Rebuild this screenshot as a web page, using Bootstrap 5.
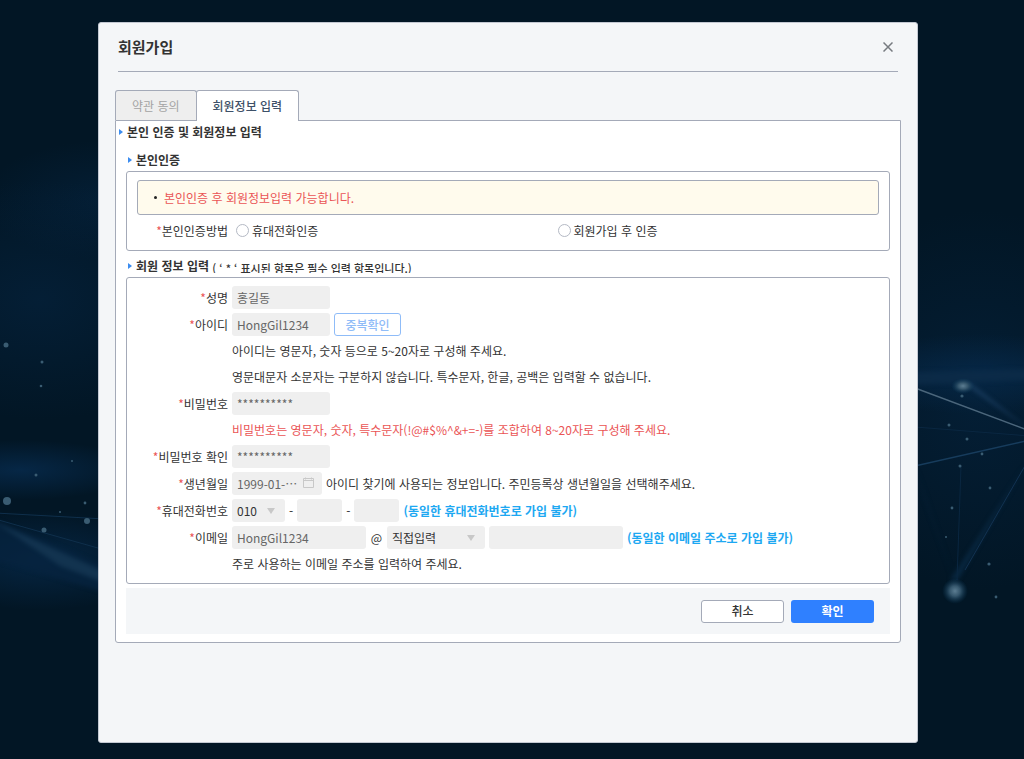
<!DOCTYPE html>
<html lang="ko">
<head>
<meta charset="utf-8">
<meta name="viewport" content="width=device-width, initial-scale=1">
<title>회원가입</title>
<link href="https://cdn.jsdelivr.net/npm/bootstrap@5.3.0/dist/css/bootstrap.min.css" rel="stylesheet">
<style>
  :root { --edge: #a4aab8; --field: #efefef; --surface: #f4f6f8; --red: #ea5455; --sky: #1da8f2; }
  body { font-family: "Noto Sans CJK KR", sans-serif; font-size: 12px; line-height: 16px; color: #333; background: #021625; }
  .backdrop { z-index: -1; }
  .dialog { margin: 22px 106px 16px 98px; min-height: calc(100vh - 38px); background: var(--surface); border: 1px solid #c3c8d2; border-radius: 3px; padding: 0 16px; }
  .dialog-head { height: 49px; margin: 0 3px; border-bottom: 1px solid var(--edge); }
  .dialog-head h1 { font-size: 15px; line-height: 20px; }
  .close-x { width: 20px; height: 20px; }
  .tabs { margin-top: 18px; border: 0; }
  .tabs .nav-link { height: 30px; margin: 0; padding: 0 16px; font-size: 12px; color: #a3a3a3; background: #eeeeee; border: 1px solid var(--edge); border-bottom: 0; border-radius: 3px 3px 0 0; }
  .tabs .nav-link.active { height: 31px; color: #3d5068; background: #fff; border-color: var(--edge); font-weight: 500; margin: 0 0 -1px -1px; position: relative; }
  .panel { background: #fff; border: 1px solid var(--edge); border-radius: 0 0 3px 3px; padding: 3px 10px 8px; }
  .heading { font-size: 12px; line-height: 16px; font-weight: 700; margin: 0; }
  .heading::before { content: ""; border: 3px solid transparent; border-left: 4px solid #3b8cf0; border-right: 0; margin-right: 4px; flex: none; }
  .heading-outer { margin-left: -7px; margin-bottom: 12px; }
  .heading-inner { margin-left: 2px; }
  .trimmed { height: 13px; overflow: hidden; font-size: 11px; font-weight: 500; }
  .frame { border: 1px solid var(--edge); border-radius: 3px; }
  .frame-auth { margin: 3px 0 7px; padding: 8px 10px; }
  .frame-info { margin: 3px 0 4px; padding: 8px 0; }
  .notice { height: 35px; padding-left: 16px; background: #fffbed; border: 1px solid var(--edge); border-radius: 3px; color: var(--red); }
  .notice::before { content: ""; width: 3px; height: 3px; border-radius: 50%; background: #222; margin-right: 7px; }
  .line { display: flex; align-items: center; gap: 4px; min-height: 23px; margin-bottom: 4px; }
  .line-note { min-height: 22px; padding-left: 105px; }
  .cap { width: 101px; text-align: right; flex: none; }
  .cap-auth { width: 91px; }
  .cap::before { content: "*"; color: var(--red); }
  .line .form-control, .line .form-select { width: 98px; height: 23px; min-height: 0; padding: 0 5px; font-size: 12px; line-height: 23px; color: #666; background-color: var(--field); border: 0; border-radius: 3px; }
  .line .form-select { color: #333; background-position: right 10px center; background-size: 8px 6px;
    background-image: url("data:image/svg+xml,%3csvg xmlns='http://www.w3.org/2000/svg' viewBox='0 0 8 6'%3e%3cpath d='M0 0h8L4 6z' fill='%23c8c8c8'/%3e%3c/svg%3e"); }
  .line .w-date { width: 90px; }
  .line .w-code { width: 53px; }
  .line .w-part { width: 45px; }
  .line .w-mail { width: 134px; }
  .at-sign { width: 13px; text-align: center; }
  .cal { right: 8px; top: 5px; }
  .choice { width: 13px; height: 13px; margin: 0 3px 0 0; border-color: #b4b9c4; }
  .hint { color: var(--sky); font-weight: 700; }
  .warn { color: var(--red); }
  .btn-small { font-size: 12px; line-height: 16px; border-radius: 3px; padding: 0; }
  .btn-dup { width: 67px; height: 23px; color: #8fbcf8; background: #fff; border: 1px solid #8fbcf8; font-weight: 500; }
  .btn-foot { width: 83px; height: 23px; font-weight: 500; }
  .btn-cancel { color: #333; background: #fff; border: 1px solid var(--edge); }
  .btn-ok { color: #fff; background: #2f80ff; border: 0; font-weight: 700; }
  .foot { height: 46px; background: var(--surface); padding-right: 16px; gap: 7px; }
</style>
</head>
<body>
<svg class="backdrop position-fixed top-0 start-0 w-100 h-100" viewBox="0 0 1024 759" preserveAspectRatio="xMidYMid slice" aria-hidden="true">
  <defs>
    <radialGradient id="haze"><stop offset="0" stop-color="#062746"/><stop offset="1" stop-color="#062746" stop-opacity="0"/></radialGradient>
    <radialGradient id="orb"><stop offset="0" stop-color="#5c7d92"/><stop offset=".4" stop-color="#35566c"/><stop offset="1" stop-color="#0a3554" stop-opacity="0"/></radialGradient>
    <filter id="soft" x="-20%" y="-50%" width="140%" height="200%" color-interpolation-filters="sRGB"><feGaussianBlur stdDeviation="2"/></filter>
  </defs>
  <rect width="1024" height="759" fill="#021625"/>
  <ellipse cx="110" cy="200" rx="130" ry="60" fill="url(#haze)" opacity=".5"/>
  <ellipse cx="40" cy="300" rx="170" ry="120" fill="url(#haze)" opacity=".5"/>
  <ellipse cx="20" cy="470" rx="120" ry="30" fill="url(#haze)"/>
  <ellipse cx="40" cy="560" rx="130" ry="50" fill="url(#haze)" opacity=".9"/>
  <ellipse cx="980" cy="400" rx="170" ry="190" fill="url(#haze)" opacity=".5"/>
  <ellipse cx="980" cy="374" rx="150" ry="40" fill="url(#haze)"/>
  <g filter="url(#soft)">
    <path d="M-5 520 105 566V592L-5 560z" fill="#06233e" opacity=".8"/>
    <path d="M-5 522 105 572V583L60 566z" fill="#12334f"/>
    <path d="M910 372 1030 369V380L910 385z" fill="#0c2c49" opacity=".8"/>
    <path d="M960 381 972 384 1030 430z" fill="#17395a"/>
    <path d="M1026 464 958 580 950 580z" fill="#08263f"/>
    <path d="M915 466 925 500 956 586z" fill="#061f34"/>
  </g>
  <g fill="none">
    <path d="M-5 513 105 519M-5 519 105 550" stroke="#0f2f4b"/>
    <path d="M915 388 1030 431" stroke="#4b667b" stroke-width="1.4"/>
    <path d="M915 466 1030 440" stroke="#173c5c" stroke-width="1.4"/>
    <path d="M915 427 1030 436M961 466 957 580" stroke="#0a2741"/>
    <path d="M1026 464 965 570" stroke="#123251"/>
  </g>
  <ellipse cx="963" cy="386" rx="12" ry="8" fill="url(#orb)"/>
  <circle cx="955" cy="591" r="13" fill="url(#orb)"/>
  <g fill="#3a5c72">
    <circle cx="6" cy="345" r="2.5"/><circle cx="42" cy="362" r="1.5"/><circle cx="41" cy="386" r="1.3"/><circle cx="36" cy="475" r="1.5"/>
    <circle cx="7" cy="501" r="4"/><circle cx="44" cy="530" r="2.5"/><circle cx="87" cy="521" r="3"/><circle cx="85" cy="503" r="1.4"/><circle cx="72" cy="461" r="1"/><circle cx="60" cy="512" r="1"/>
    <circle cx="949" cy="425" r="1.5"/><circle cx="967" cy="439" r="1.5"/><circle cx="982" cy="454" r="1.4"/><circle cx="960" cy="466" r="1.5"/><circle cx="990" cy="488" r="1.4"/><circle cx="952" cy="508" r="1.4"/><circle cx="946" cy="537" r="1"/><circle cx="989" cy="564" r="1.6"/><circle cx="996" cy="597" r="1.4"/><circle cx="962" cy="396" r="1.6"/>
  </g>
</svg>

<main class="dialog">
  <header class="dialog-head d-flex align-items-center justify-content-between">
    <h1 class="fw-bold m-0">회원가입</h1>
    <button type="button" class="close-x btn p-0 border-0 d-flex align-items-center justify-content-center" aria-label="닫기">
      <svg width="10" height="10" viewBox="0 0 10 10" fill="none" stroke="#777b80" stroke-width="1.5"><path d="M.5.5l9 9M9.500.5l-9 9"/></svg>
    </button>
  </header>

  <nav class="nav nav-tabs tabs">
    <button type="button" class="nav-link">약관 동의</button>
    <button type="button" class="nav-link active" aria-current="page">회원정보 입력</button>
  </nav>

  <form class="panel">
    <h2 class="heading heading-outer d-flex align-items-center">본인 인증 및 회원정보 입력</h2>

    <h3 class="heading heading-inner d-flex align-items-center">본인인증</h3>
    <section class="frame frame-auth">
      <div class="notice d-flex align-items-center">본인인증 후 회원정보입력 가능합니다.</div>
      <div class="line mt-1 mb-0" role="radiogroup" aria-labelledby="method">
        <span class="cap cap-auth" id="method">본인인증방법</span>
        <div class="row g-0 flex-fill ps-1">
          <div class="col-6 d-flex align-items-center"><input class="form-check-input choice" type="radio" name="auth" id="auth-phone"><label for="auth-phone">휴대전화인증</label></div>
          <div class="col-6 d-flex align-items-center"><input class="form-check-input choice" type="radio" name="auth" id="auth-later"><label for="auth-later">회원가입 후 인증</label></div>
        </div>
      </div>
    </section>

    <h3 class="heading heading-inner d-flex align-items-center">회원 정보 입력&nbsp;<span class="trimmed">( ‘ * ‘ 표시된 항목은 필수 입력 항목입니다.)</span></h3>
    <section class="frame frame-info">
      <div class="line"><label class="cap" for="name">성명</label><input class="form-control" id="name" value="홍길동"></div>
      <div class="line"><label class="cap" for="uid">아이디</label><input class="form-control" id="uid" value="HongGil1234"><button type="button" class="btn btn-small btn-dup">중복확인</button></div>
      <div class="line line-note">아이디는 영문자, 숫자 등으로 5~20자로 구성해 주세요.</div>
      <div class="line line-note">영문대문자 소문자는 구분하지 않습니다. 특수문자, 한글, 공백은 입력할 수 없습니다.</div>
      <div class="line"><label class="cap" for="pw">비밀번호</label><input class="form-control" id="pw" value="**********"></div>
      <div class="line line-note warn">비밀번호는 영문자, 숫자, 특수문자(!@#$%^&amp;+=-)를 조합하여 8~20자로 구성해 주세요.</div>
      <div class="line"><label class="cap" for="pw2">비밀번호 확인</label><input class="form-control" id="pw2" value="**********"></div>
      <div class="line"><label class="cap" for="birth">생년월일</label>
        <div class="position-relative"><input class="form-control w-date" id="birth" value="1999-01-⋯">
          <svg class="cal position-absolute" width="11" height="12" viewBox="0 0 11 12" fill="none" stroke="#c8c8c8"><path d="M.5 1.500h10v9H.5zM.5 3.500h10M2.500.5v2M8.500.5v2"/></svg></div>
        <span>아이디 찾기에 사용되는 정보입니다. 주민등록상 생년월일을 선택해주세요.</span></div>
      <div class="line"><label class="cap" for="tel1">휴대전화번호</label>
        <select class="form-select w-code" id="tel1"><option>010</option></select><span>-</span>
        <input class="form-control w-part" aria-label="휴대전화 가운데 자리"><span>-</span>
        <input class="form-control w-part" aria-label="휴대전화 끝 자리"><span class="hint">(동일한 휴대전화번호로 가입 불가)</span></div>
      <div class="line"><label class="cap" for="mail">이메일</label><input class="form-control w-mail" id="mail" value="HongGil1234"><span class="at-sign">@</span>
        <select class="form-select" aria-label="이메일 도메인"><option>직접입력</option></select>
        <input class="form-control w-mail" aria-label="도메인 직접입력"><span class="hint">(동일한 이메일 주소로 가입 불가)</span></div>
      <div class="line line-note mb-0">주로 사용하는 이메일 주소를 입력하여 주세요.</div>
    </section>

    <footer class="foot d-flex align-items-center justify-content-end">
      <button type="button" class="btn btn-small btn-foot btn-cancel">취소</button>
      <button type="submit" class="btn btn-small btn-foot btn-ok">확인</button>
    </footer>
  </form>
</main>
<script src="https://cdn.jsdelivr.net/npm/bootstrap@5.3.0/dist/js/bootstrap.bundle.min.js"></script>
</body>
</html>
